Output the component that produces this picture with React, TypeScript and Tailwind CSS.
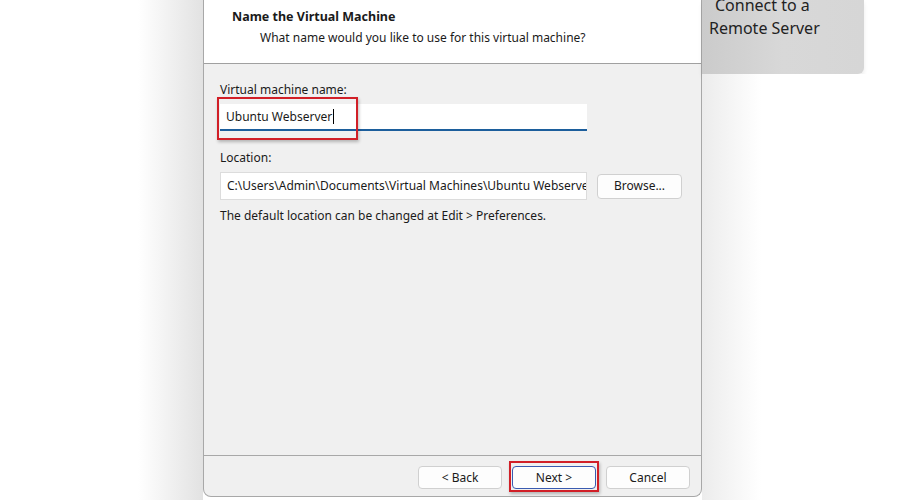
export default function App() {
  return (
    <div className="flex h-[500px] w-[900px] overflow-hidden bg-white font-['Noto_Sans',sans-serif] text-[12px] text-[#1a1a1a]">
      <div className="h-full w-[203px] bg-gradient-to-r from-white from-[68%] to-[#e2e2e2]" />

      <div className="flex h-[497px] w-[499px] flex-col rounded-b-[8px] border-x border-b border-[#a8a8a8] bg-[#f0f0f0]">
        <div className="h-[64px] border-b border-[#a0a0a0] bg-white pl-[28px] pt-[8px]">
          <div className="text-[12.5px] font-bold leading-[18px]">Name the Virtual Machine</div>
          <div className="mt-[3px] pl-[28px] leading-[18px]">What name would you like to use for this virtual machine?</div>
        </div>

        <div className="flex-1 px-[16px] pt-[17px]">
          <div className="leading-[18px]">Virtual machine name:</div>
          <div className="relative mt-[5px] w-[367px]">
            <div className="flex h-[27px] items-center border-b-2 border-[#1c5e9c] bg-white pl-[6px]">
              Ubuntu Webserver<span className="ml-px inline-block h-[15px] w-px bg-black" />
            </div>
            <div className="absolute left-[-3px] top-[-7px] h-[43px] w-[141px] border-2 border-[#d11f27] shadow-[1px_2px_3px_rgba(0,0,0,0.25)]" />
          </div>

          <div className="mt-[18px] leading-[18px]">Location:</div>
          <div className="mt-[5px] flex items-center gap-[10px]">
            <div className="flex h-[28px] w-[367px] items-center overflow-hidden whitespace-nowrap border border-[#dcdcdc] bg-white pl-[6px]">
              C:\Users\Admin\Documents\Virtual Machines\Ubuntu Webserver
            </div>
            <button className="h-[25px] w-[85px] rounded-[4px] border border-[#d0d0d0] bg-[#fdfdfd]">Browse...</button>
          </div>
          <div className="mt-[7px] leading-[18px]">The default location can be changed at Edit &gt; Preferences.</div>
        </div>

        <div className="flex h-[41px] items-start justify-end gap-[10px] border-t border-[#a8a8a8] pr-[11px] pt-[10px]">
          <button className="h-[23px] w-[84px] rounded-[4px] border border-[#d0d0d0] bg-[#fdfdfd]">&lt; Back</button>
          <div className="relative">
            <button className="h-[23px] w-[84px] rounded-[4px] border border-[#3a5bb0] bg-[#fdfdfd]">Next &gt;</button>
            <div className="absolute left-[-3px] top-[-5px] h-[31px] w-[90px] border-2 border-[#d11f27] shadow-[1px_2px_3px_rgba(0,0,0,0.25)]" />
          </div>
          <button className="h-[23px] w-[84px] rounded-[4px] border border-[#d0d0d0] bg-[#fdfdfd]">Cancel</button>
        </div>
      </div>

      <div className="flex flex-1 flex-col">
        <div className="h-[74px] w-[162px] rounded-br-[6px] bg-gradient-to-r from-[#cbcbcb] via-[#d8d8d8] to-[#d6d6d6] pl-[7px] text-[16px] leading-[23px] text-[#222] shadow-[0_3px_4px_rgba(0,0,0,0.08)]">
          <div className="mt-[-6px] pl-[6px]">Connect to a</div>
          <div>Remote Server</div>
        </div>
        <div className="flex-1 bg-gradient-to-r from-[#ececec] to-white to-[30%]" />
      </div>
    </div>
  );
}
